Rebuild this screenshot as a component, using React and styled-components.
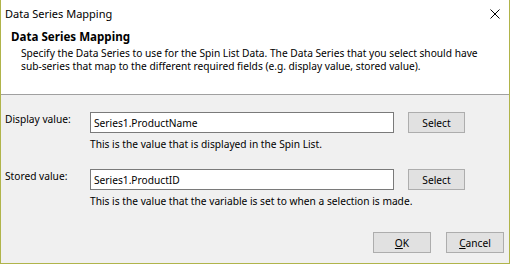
import styled, { createGlobalStyle } from 'styled-components';

const GlobalStyle = createGlobalStyle`
  body {
    margin: 0;
    font-family: "Noto Sans", "Liberation Sans", sans-serif;
    font-size: 10.2px;
    color: #000;
  }
`;

const Window = styled.div`
  box-sizing: border-box;
  width: 510px;
  height: 264px;
  border: 1px solid #b0b44a;
  border-top: none;
  background: #f0f0f0;
  display: flex;
  flex-direction: column;
  white-space: nowrap;
`;

const Top = styled.div`
  background: #fff;
  height: 94px;
  border-bottom: 1px solid #a0a0a0;
  display: flex;
  flex-direction: column;
`;

const TitleBar = styled.div`
  box-sizing: border-box;
  height: 29px;
  display: flex;
  align-items: center;
  justify-content: space-between;
  padding: 0 9px 2px 4px;
  font-size: 11px;
`;

const Close = styled.svg`
  width: 10px;
  height: 10px;
  margin-top: 1px;
`;

const Heading = styled.div`
  font-weight: 700;
  font-size: 11.6px;
  padding-left: 10px;
  line-height: 16px;
`;

const Desc = styled.div`
  padding-left: 20px;
  line-height: 13px;
  margin-top: 2px;
`;

const Body = styled.div`
  flex: 1;
  display: flex;
  flex-direction: column;
  padding: 17px 0 0 4px;
`;

const Row = styled.div`
  display: grid;
  grid-template-columns: 71px 304px 57px;
  column-gap: 14px;
  margin-bottom: ${(p) => p.$gap}px;
`;

const Label = styled.div`
  line-height: 14px;
`;

const Field = styled.div`
  box-sizing: border-box;
  height: 21px;
  border: 1px solid #7a7a7a;
  background: #fff;
  padding: 0 3px;
  display: flex;
  align-items: center;
`;

const Help = styled.div`
  grid-column: 2 / 4;
  margin-top: 4px;
  line-height: 14px;
`;

const Button = styled.div`
  box-sizing: border-box;
  width: ${(p) => p.$w || 57}px;
  height: 21px;
  border: 1px solid #adadad;
  background: #e1e1e1;
  display: flex;
  align-items: center;
  justify-content: center;
`;

const Footer = styled.div`
  margin-top: auto;
  display: flex;
  justify-content: flex-end;
  gap: 15px;
  padding: 0 5px 10px 0;
`;

const Mnemonic = styled.span`
  text-decoration: underline;
`;

function MappingRow({ label, value, help, gap }) {
  return (
    <Row $gap={gap}>
      <Label>{label}</Label>
      <Field>{value}</Field>
      <Button>Select</Button>
      <Help>{help}</Help>
    </Row>
  );
}

export default function App() {
  return (
    <>
      <GlobalStyle />
      <Window>
        <Top>
          <TitleBar>
            <span>Data Series Mapping</span>
            <Close viewBox="0 0 10 10">
              <path d="M0.5 0.5 L9.5 9.5 M9.5 0.5 L0.5 9.5" stroke="#000" strokeWidth="1" />
            </Close>
          </TitleBar>
          <Heading>Data Series Mapping</Heading>
          <Desc>
            Specify the Data Series to use for the Spin List Data. The Data Series that you select should have
            <br />
            sub-series that map to the different required fields (e.g. display value, stored value).
          </Desc>
        </Top>
        <Body>
          <MappingRow
            label="Display value:"
            value="Series1.ProductName"
            help="This is the value that is displayed in the Spin List."
            gap={18}
          />
          <MappingRow
            label="Stored value:"
            value="Series1.ProductID"
            help="This is the value that the variable is set to when a selection is made."
            gap={0}
          />
          <Footer>
            <Button $w={58}>
              <Mnemonic>O</Mnemonic>K
            </Button>
            <Button $w={58}>
              <Mnemonic>C</Mnemonic>ancel
            </Button>
          </Footer>
        </Body>
      </Window>
    </>
  );
}
